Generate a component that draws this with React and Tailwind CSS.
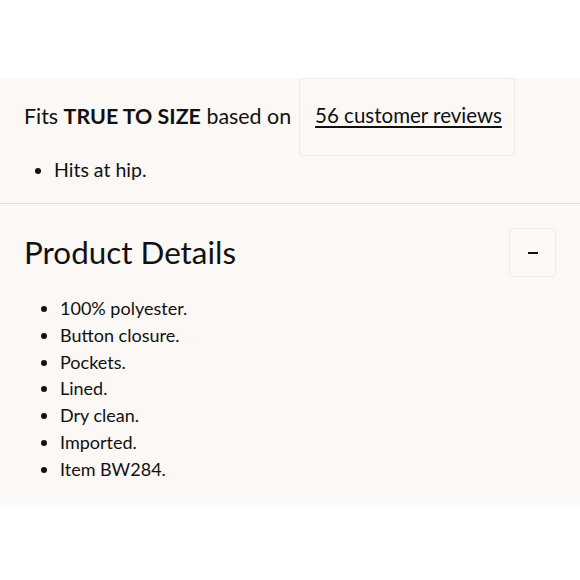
export default function App() {
  const details = [
    "100% polyester.",
    "Button closure.",
    "Pockets.",
    "Lined.",
    "Dry clean.",
    "Imported.",
    "Item BW284.",
  ];

  return (
    <div className="w-[580px] h-[580px] bg-white text-[#111] font-['Lato',sans-serif]">
      <div className="h-[78px]" />
      <div className="bg-[#fbf8f6]">
        {/* fit section */}
        <div className="px-6 pb-[20px]">
          <div className="flex items-start">
            <p className="text-[21.4px] mt-[24px] leading-[28px]">
              Fits <span className="font-bold">TRUE TO SIZE</span> based on
            </p>
            <div className="ml-[8px] w-[216px] h-[78px] border border-[#f0ebe7] rounded-[4px] px-[15px] pt-[22px] whitespace-nowrap">
              <a href="#" className="text-[20.5px] leading-[28px] underline underline-offset-[3px]">
                56 customer reviews
              </a>
            </div>
          </div>
          <ul className="list-disc pl-[30px] mt-[1px] text-[19.5px] leading-[26px]">
            <li>Hits at hip.</li>
          </ul>
        </div>
        <div className="h-px bg-[#e2dedb]" />

        {/* product details */}
        <div className="px-6 pt-[24px] pb-[22px]">
          <div className="flex items-center justify-between">
            <h2 className="text-[31.4px] leading-[49px]">Product Details</h2>
            <button className="w-[47px] h-[49px] border border-[#f0ebe7] rounded-[4px] flex items-center justify-center">
              <span className="block w-[10px] h-[2px] bg-[#111]" />
            </button>
          </div>
          <ul className="list-disc pl-[36px] mt-[18px] text-[18px] leading-[26.8px]">
            {details.map((d) => (
              <li key={d}>{d}</li>
            ))}
          </ul>
        </div>
      </div>
    </div>
  );
}
